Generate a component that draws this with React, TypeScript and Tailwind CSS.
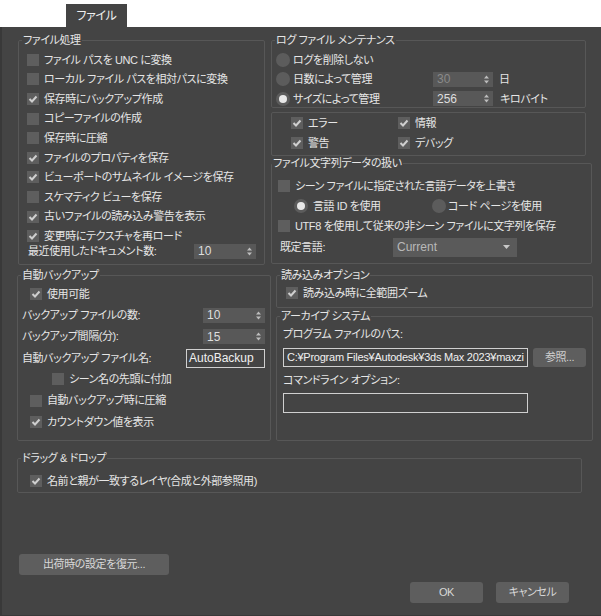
import React from 'react';

type Kids = { children?: React.ReactNode };

const Check = ({ on = false }: { on?: boolean }) => (
  <span className="w-[12px] h-[12px] bg-[#5e5e5e] flex items-center justify-center shrink-0">
    {on && (
      <svg width="10" height="10" viewBox="0 0 10 10">
        <path d="M1.5 5 L4 7.5 L8.5 2.5" fill="none" stroke="#cfcfcf" strokeWidth="2" />
      </svg>
    )}
  </span>
);

const Radio = ({ on = false }: { on?: boolean }) => (
  <span className="w-[14px] h-[14px] rounded-full bg-[#5c5c5c] flex items-center justify-center shrink-0">
    {on && <span className="w-[8px] h-[8px] rounded-full bg-[#e8e8e8]" />}
  </span>
);

const CheckRow = ({ on = false, label, className = '' }: { on?: boolean; label: string; className?: string }) => (
  <div className={`flex items-center gap-[5px] ${className}`}>
    <Check on={on} />
    <span className="whitespace-nowrap">{label}</span>
  </div>
);

// 数値スピナー
const Spin = ({ v, dim = false, className = '' }: { v: string; dim?: boolean; className?: string }) => (
  <div className={`h-[15px] bg-[#585858] flex items-center pl-[4px] pr-[4px] tracking-normal ${className}`}>
    <span className={`flex-1 text-[12px] leading-none ${dim ? 'text-[#8a8a8a]' : 'text-[#dedede]'}`}>{v}</span>
    <svg width="5" height="9" viewBox="0 0 5 9">
      <path d="M0 3.5 L2.5 0.5 L5 3.5Z M0 5.5 L2.5 8.5 L5 5.5Z" fill="#bdbdbd" />
    </svg>
  </div>
);

const Group = ({ title, className = '', legendClass = 'ml-[3px]', children }: Kids & { title: string; className?: string; legendClass?: string }) => (
  <fieldset className={`border border-[#575757] rounded-[2px] min-w-0 shrink-0 ${className}`}>
    <legend className={`${legendClass} px-[1px] leading-[14px] whitespace-nowrap`}>{title}</legend>
    {children}
  </fieldset>
);

const fileRows: [boolean, string][] = [
  [false, 'ファイル パスを UNC に変換'],
  [false, 'ローカル ファイル パスを相対パスに変換'],
  [true, '保存時にバックアップ作成'],
  [false, 'コピーファイルの作成'],
  [false, '保存時に圧縮'],
  [true, 'ファイルのプロパティを保存'],
  [true, 'ビューポートのサムネイル イメージを保存'],
  [false, 'スケマティク ビューを保存'],
  [true, '古いファイルの読み込み警告を表示'],
  [true, '変更時にテクスチャを再ロード'],
];

export default function App() {
  return (
    <div className="w-[601px] h-[616px] bg-white overflow-hidden font-['Liberation_Sans','Noto_Sans_CJK_JP',sans-serif] text-[11px] tracking-[-0.4px] text-[#e6e6e6] [font-feature-settings:'palt']">
      {/* タブ */}
      <div className="h-[27px] flex items-end">
        <div className="ml-[66px] w-[61px] h-[23px] bg-[#444444] flex items-center justify-center text-[12px] text-[#f0f0f0]">
          ファイル
        </div>
      </div>

      <div className="h-[589px] bg-[#444444] border-l-2 border-b border-[#393939] flex flex-col">
        {/* 上段 */}
        <div className="flex mt-[6px] ml-[16px]">
          <Group title="ファイル処理" className="w-[247px] h-[232px]">
            <div className="pt-[3px] pl-[8px] pr-[8px]">
              {fileRows.map(([on, label]) => (
                <CheckRow key={label} on={on} label={label} className="h-[19.6px]" />
              ))}
              <div className="-mt-[2px] h-[15px] flex items-center justify-between pl-[1px]">
                <span>最近使用したドキュメント数:</span>
                <Spin v="10" className="w-[62px]" />
              </div>
            </div>
          </Group>

          <div className="ml-[6px] flex flex-col">
            <Group title="ログ ファイル メンテナンス" className="w-[315px] h-[75px]">
              <div className="pt-[3px] pl-[4px]">
                <div className="h-[19.5px] flex items-center gap-[3px]">
                  <Radio />
                  <span>ログを削除しない</span>
                </div>
                <div className="h-[19.5px] flex items-center">
                  <div className="w-[157px] flex items-center gap-[3px]">
                    <Radio />
                    <span>日数によって管理</span>
                  </div>
                  <Spin v="30" dim className="w-[60px]" />
                  <span className="ml-[6px]">日</span>
                </div>
                <div className="h-[19.5px] flex items-center">
                  <div className="w-[157px] flex items-center gap-[3px]">
                    <Radio on />
                    <span>サイズによって管理</span>
                  </div>
                  <Spin v="256" className="w-[60px]" />
                  <span className="ml-[7px]">キロバイト</span>
                </div>
              </div>
            </Group>

            <div className="mt-[4px] w-[315px] h-[44px] border border-[#575757] rounded-[2px] pl-[19px]">
              <div className="grid grid-cols-[107px_auto] auto-rows-[20px] items-center">
                <CheckRow on label="エラー" />
                <CheckRow on label="情報" />
                <CheckRow on label="警告" />
                <CheckRow on label="デバッグ" />
              </div>
            </div>

            <Group title="ファイル文字列データの扱い" legendClass="ml-0" className="w-[321px] h-[108px]">
              <div className="pt-[6px] pl-[6px]">
                <CheckRow label="シーン ファイルに指定された言語データを上書き" className="h-[20px]" />
                <div className="h-[20px] flex items-center pl-[16px]">
                  <div className="w-[138px] flex items-center gap-[5px]">
                    <Radio on />
                    <span>言語 ID を使用</span>
                  </div>
                  <div className="flex items-center gap-[2px]">
                    <Radio />
                    <span>コード ページを使用</span>
                  </div>
                </div>
                <CheckRow label="UTF8 を使用して従来の非シーン ファイルに文字列を保存" className="h-[20px]" />
                <div className="mt-[1px] h-[20px] flex items-center pl-[2px]">
                  <span className="w-[113px]">既定言語:</span>
                  <div className="w-[124px] h-[19px] bg-[#5a5a5a] flex items-center pl-[4px] pr-[7px] text-[12px] tracking-normal text-[#b8b8b8]">
                    <span className="flex-1">Current</span>
                    <svg width="7" height="4" viewBox="0 0 7 4">
                      <path d="M0 0H7L3.5 4Z" fill="#c8c8c8" />
                    </svg>
                  </div>
                </div>
              </div>
            </Group>
          </div>
        </div>

        {/* 中段 */}
        <div className="flex mt-[3px] ml-[15px]">
          <Group title="自動バックアップ" className="w-[254px] h-[173px]">
            <div className="pt-[1.5px] pr-[5px]">
              <CheckRow on label="使用可能" className="h-[21.3px] pl-[12px]" />
              <div className="h-[21.3px] flex items-center justify-between pl-[4px]">
                <span>バックアップ ファイルの数:</span>
                <Spin v="10" className="w-[62px]" />
              </div>
              <div className="h-[21.3px] flex items-center justify-between pl-[4px]">
                <span>バックアップ間隔(分):</span>
                <Spin v="15" className="w-[62px]" />
              </div>
              <div className="h-[21.3px] flex items-center justify-between pl-[4px]">
                <span>自動バックアップ ファイル名:</span>
                <div className="w-[79px] h-[19px] border border-[#d0d0d0] pl-[2px] text-[12px] tracking-normal leading-[17px] text-[#f0f0f0]">
                  AutoBackup
                </div>
              </div>
              <CheckRow label="シーン名の先頭に付加" className="h-[21.3px] pl-[34px]" />
              <CheckRow label="自動バックアップ時に圧縮" className="h-[21.3px] pl-[12px]" />
              <CheckRow on label="カウントダウン値を表示" className="h-[21.3px] pl-[12px]" />
            </div>
          </Group>

          <div className="ml-[5px] flex flex-col">
            <Group title="読み込みオプション" className="w-[317px] h-[40px]">
              <div className="pt-[1px] pl-[9px]">
                <CheckRow on label="読み込み時に全範囲ズーム" className="h-[20px]" />
              </div>
            </Group>

            <Group title="アーカイブ システム" className="mt-[1px] w-[317px] h-[132px]">
              <div className="pt-[1px] pl-[6px]">
                <div className="h-[20px] flex items-center">プログラム ファイルのパス:</div>
                <div className="mt-[4px] flex gap-[5px]">
                  <div className="w-[245px] h-[19px] border border-[#d0d0d0] overflow-hidden whitespace-nowrap pl-[3px] text-[11px] tracking-[-0.25px] leading-[17px] text-[#f0f0f0]">
                    C:¥Program Files¥Autodesk¥3ds Max 2023¥maxzi
                  </div>
                  <button className="w-[53px] h-[19px] bg-[#5e5e5e] rounded-[3px] text-[#cfcfcf] text-[11px] leading-none">
                    参照...
                  </button>
                </div>
                <div className="mt-[3px] h-[20px] flex items-center">コマンドライン オプション:</div>
                <div className="mt-[3px] w-[245px] h-[20px] border border-[#d0d0d0]" />
              </div>
            </Group>
          </div>
        </div>

        {/* ドラッグ & ドロップ */}
        <Group title="ドラッグ & ドロップ" className="mt-[10px] ml-[15px] w-[565px] h-[42px]">
          <div className="pt-[6px] pl-[12px]">
            <CheckRow on label="名前と親が一致するレイヤ(合成と外部参照用)" className="h-[20px]" />
          </div>
        </Group>

        <button className="self-start mt-[61px] ml-[17px] w-[150px] h-[21px] bg-[#5e5e5e] rounded-[3px] text-[#d8d8d8] text-[11px]">
          出荷時の設定を復元...
        </button>

        <div className="mt-[7px] ml-[408px] flex gap-[13px]">
          <button className="w-[73px] h-[21px] bg-[#5e5e5e] rounded-[3px] text-[#d8d8d8] text-[11px]">OK</button>
          <button className="w-[73px] h-[21px] bg-[#5e5e5e] rounded-[3px] text-[#d8d8d8] text-[11px]">キャンセル</button>
        </div>
      </div>
    </div>
  );
}
